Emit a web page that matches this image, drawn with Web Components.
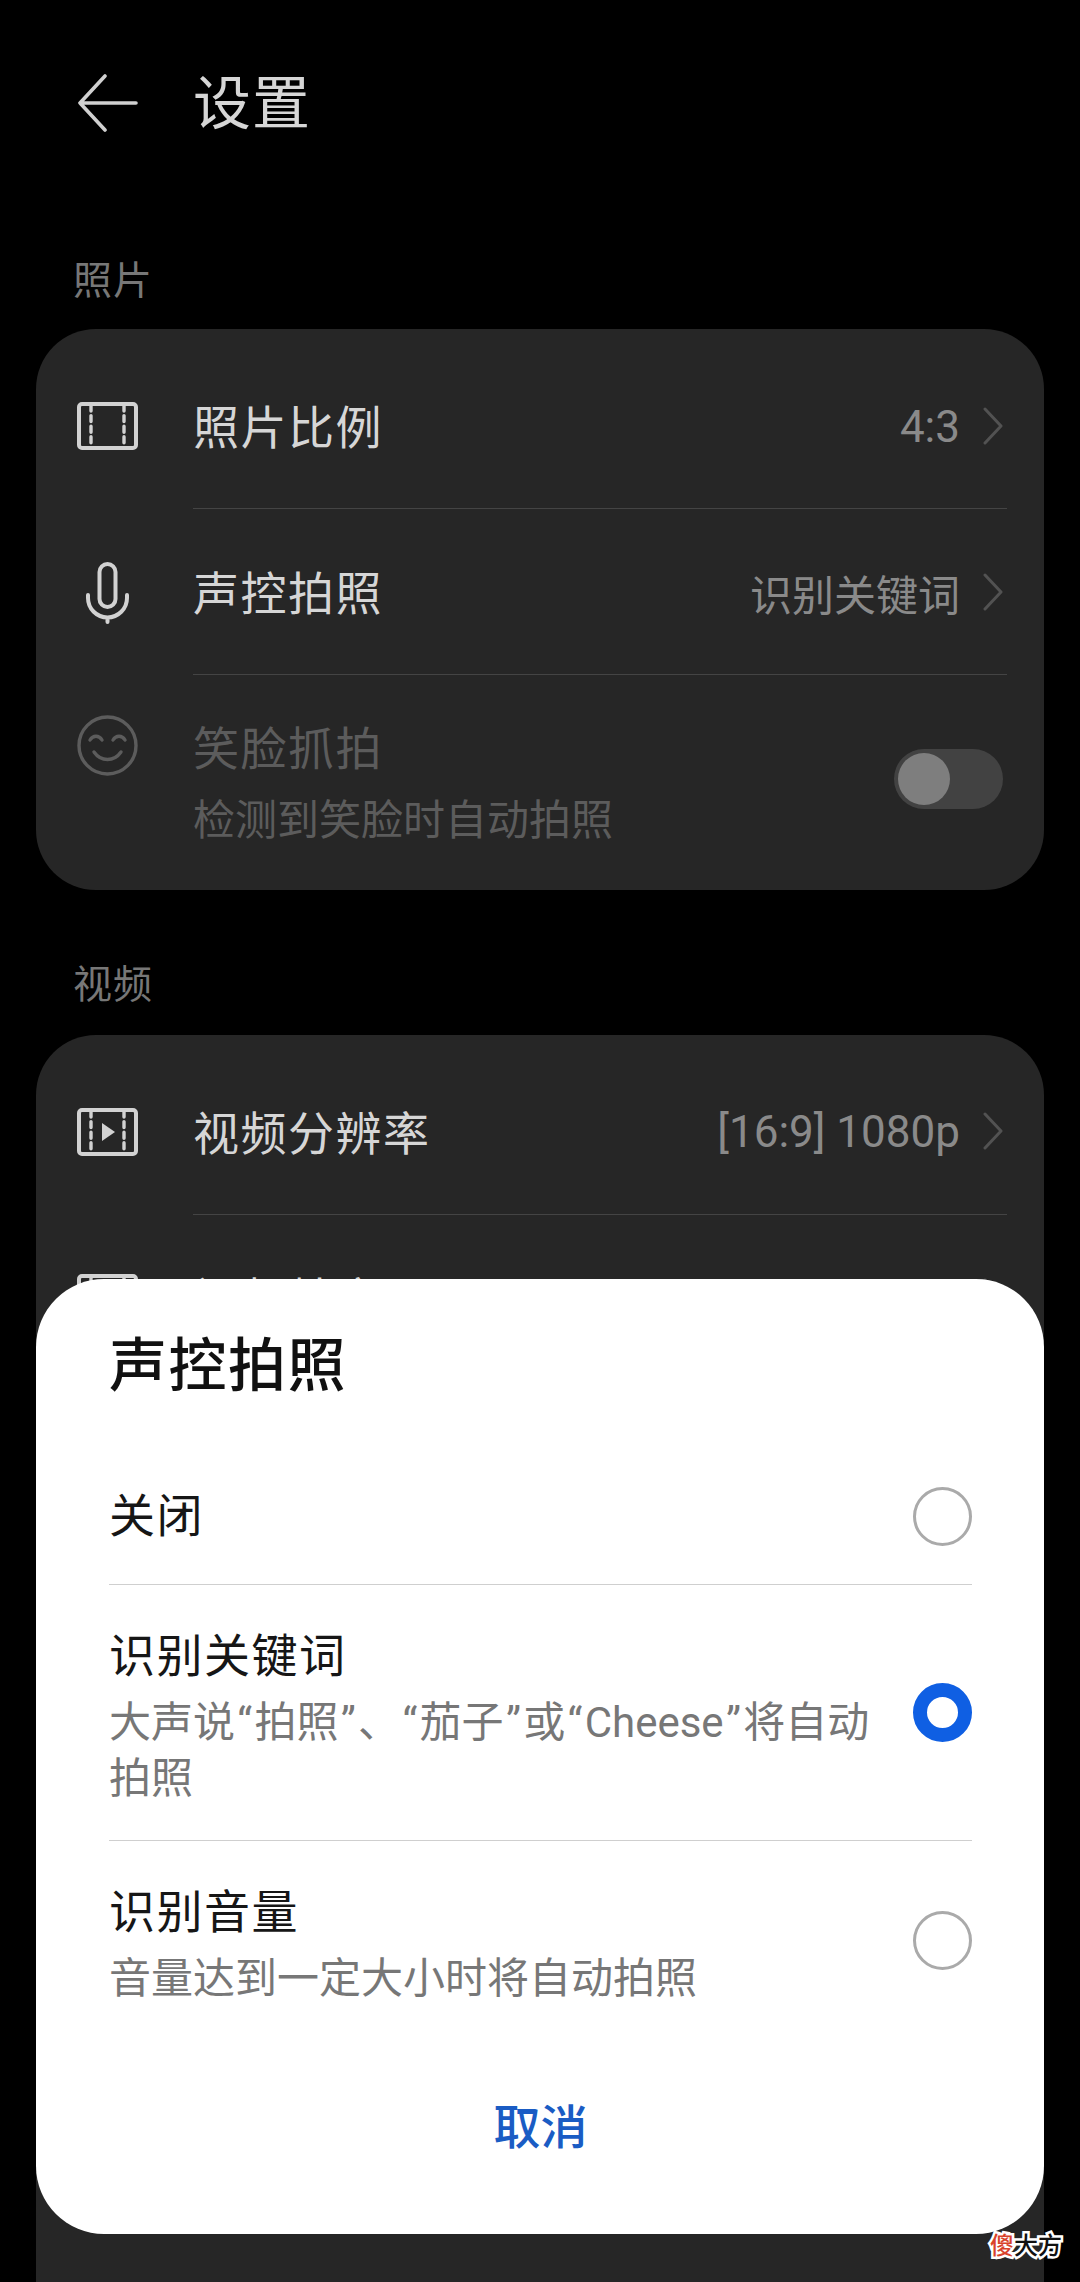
<!DOCTYPE html>
<html lang="zh-CN">
<head>
<meta charset="utf-8">
<title>设置</title>
<style>
  html, body { margin: 0; padding: 0; background: #000; }
  body { font-family: Roboto, "Noto Sans CJK SC", sans-serif; }
  .q { padding: 0 2.3px; }
</style>
</head>
<body>
<camera-settings>
  <top-bar>设置</top-bar>
  <group-label first>照片</group-label>
  <settings-card>
    <setting-row value="4:3" latin chevron>
      <line-icon slot="icon" name="film"></line-icon>照片比例
    </setting-row>
    <setting-row value="识别关键词" chevron>
      <line-icon slot="icon" name="mic"></line-icon>声控拍照
    </setting-row>
    <setting-row disabled last>
      <line-icon slot="icon" name="smile"></line-icon>笑脸抓拍
      <span slot="sub">检测到笑脸时自动拍照</span>
      <toggle-switch slot="end"></toggle-switch>
    </setting-row>
  </settings-card>
  <group-label>视频</group-label>
  <settings-card grow>
    <setting-row value="[16:9] 1080p" latin chevron>
      <line-icon slot="icon" name="video"></line-icon>视频分辨率
    </setting-row>
    <setting-row value="" chevron>
      <line-icon slot="icon" name="film"></line-icon>视频帧率
    </setting-row>
  </settings-card>

  <choice-dialog slot="overlay">
    <span slot="title">声控拍照</span>
    <choice-option plain>关闭</choice-option>
    <choice-option selected>识别关键词
      <span slot="sub">大声说<span class="q">“</span>拍照<span class="q">”</span>、<span class="q">“</span>茄子<span class="q">”</span>或<span class="q">“</span>Cheese<span class="q">”</span>将自动<br>拍照</span>
    </choice-option>
    <choice-option last>识别音量
      <span slot="sub">音量达到一定大小时将自动拍照</span>
    </choice-option>
    <span slot="action">取消</span>
  </choice-dialog>
  <water-mark slot="overlay"></water-mark>
</camera-settings>

<script>
const FONT = 'Roboto, "Noto Sans CJK SC", sans-serif';
function define(name, css, html) {
  class El extends HTMLElement {
    constructor() {
      super();
      this.attachShadow({ mode: 'open' }).innerHTML =
        '<style>' + css + '</style>' + (typeof html === 'function' ? html(this) : html);
    }
  }
  customElements.define(name, El);
}

define('camera-settings', `
  :host { display: flex; flex-direction: column; position: relative; width: 1080px; height: 2282px;
    overflow: hidden; background: #000; font-family: ${FONT}; }
`, '<slot></slot><slot name="overlay"></slot>');

define('top-bar', `
  :host { display: flex; flex: none; align-items: center; height: 204px; padding-left: 77px; box-sizing: border-box;
    color: #d6d6d6; font-size: 58px; letter-spacing: 1px; }
  svg { width: 62px; height: 60px; margin-right: 54px; flex: none; }
  .t { padding-bottom: 6px; }
`, `<svg viewBox="0 0 62 60" fill="none" stroke="#d0d0d0" stroke-width="3.6" stroke-linecap="round" stroke-linejoin="round">
    <path d="M59 31H3M28 4 3 31l25 27"/></svg><div class="t"><slot></slot></div>`);

define('group-label', `
  :host { display: block; flex: none; margin: 70px 0 0 73px; padding-bottom: 24.5px; height: 50px; line-height: 50px;
    color: #777; font-size: 39px; letter-spacing: 1px; }
  :host([first]) { margin-top: 52px; padding-bottom: 23px; }
`, '<slot></slot>');

define('settings-card', `
  :host { display: block; flex: none; margin: 0 36px; padding-top: 14px; background: #262626; border-radius: 60px; }
  :host([grow]) { min-height: 1400px; }
`, '<slot></slot>');

define('setting-row', `
  :host { display: flex; align-items: stretch; padding-left: 41px; color: #d6d6d6; font-size: 46px; letter-spacing: 1.5px; }
  .icon { flex: none; width: 116px; display: flex; align-items: center; }
  .main { flex: 1; display: flex; align-items: center; min-height: 165px; margin-right: 37px; padding-right: 4px;
    border-bottom: 1.5px solid #444; }
  .text { flex: 1; }
  .title { line-height: 60px; padding-top: 5px; }
  .sub { display: none; line-height: 60px; margin-top: 10px; }
  ::slotted([slot=sub]) { font-size: 42px; letter-spacing: 0; }
  .value { color: #8a8a8a; font-size: 42px; letter-spacing: 0; padding-top: 2px; }
  :host([latin]) .value { font-size: 44px; }
  .chev { display: none; width: 20px; height: 38px; margin-left: 23px; flex: none; }
  :host([chevron]) .chev { display: block; }
  :host([last]) .main { border-bottom: 0; min-height: 0; padding-top: 39px; padding-bottom: 39px; }
  :host([disabled]) { color: #5c5c5c; }
  :host([disabled]) .sub { display: block; }
  :host([disabled]) .icon { align-items: flex-start; padding-top: 40px; }
`, el => `<div class="icon"><slot name="icon"></slot></div>
  <div class="main">
    <div class="text"><div class="title"><slot></slot></div><div class="sub"><slot name="sub"></slot></div></div>
    <span class="value">${el.getAttribute('value') || ''}</span>
    <svg class="chev" viewBox="0 0 20 38" fill="none" stroke="#525252" stroke-width="3" stroke-linecap="round" stroke-linejoin="round"><path d="M2 2l16 17L2 36"/></svg>
    <slot name="end"></slot>
  </div>`);

const ICONS = {
  film: `<rect x="2" y="2" width="57" height="44" rx="3"/><path d="M14 3v42M47 3v42" stroke-width="3.4" stroke-dasharray="6 4.6"/>`,
  video: `<rect x="2" y="2" width="57" height="44" rx="3"/><path d="M14 3v42M47 3v42" stroke-width="3.4" stroke-dasharray="6 4.6"/><path d="M25 15l13 9-13 9z" fill="currentColor" stroke="none"/>`,
  mic: `<rect x="22.5" y="2" width="16" height="43" rx="8"/><path d="M11 33v3a19.5 19.5 0 0 0 39 0v-3M30.5 56v4"/>`,
  smile: `<circle cx="30.5" cy="30.5" r="28.5"/><path d="M13 25c3-5 9-5 12 0M36 25c3-5 9-5 12 0M17 37c7 10 20 10 27 0"/>`
};
define('line-icon', `
  :host { display: block; width: 61px; line-height: 0; color: #d2d2d2; }
  svg { display: block; width: 61px; }
  :host([name="smile"]) { color: #5c5c5c; }
  :host([name="mic"]) { padding-top: 2px; }
`, el => {
  const n = el.getAttribute('name');
  const h = (n === 'film' || n === 'video') ? 48 : 62;
  return `<svg viewBox="0 0 61 ${h}" height="${h}" fill="none" stroke="currentColor" stroke-width="${n === 'smile' ? 3.4 : 4}" stroke-linecap="round" stroke-linejoin="round">${ICONS[n]}</svg>`;
});

define('toggle-switch', `
  :host { display: block; position: relative; width: 109px; height: 60px; border-radius: 30px; background: #424242; flex: none; top: -4px; }
  i { position: absolute; left: 4px; top: 4px; width: 52px; height: 52px; border-radius: 50%; background: #7e7e7e; }
`, '<i></i>');

define('choice-dialog', `
  :host { display: block; position: absolute; left: 36px; right: 36px; top: 1279px; height: 955px; box-sizing: border-box;
    background: #fff; border-radius: 68px; padding: 0 72px 0 73px; color: #111; }
  .title { display: flex; align-items: center; box-sizing: border-box; height: 172px; font-size: 58px; font-weight: 500; letter-spacing: 1.5px; padding-bottom: 8px; }
  .action { display: flex; align-items: center; justify-content: center; box-sizing: border-box; height: 174px; padding-bottom: 6px; color: #1a5cc4;
    font-size: 47px; font-weight: 500; }
`, `<div class="title"><slot name="title"></slot></div><slot></slot><div class="action"><slot name="action"></slot></div>`);

define('choice-option', `
  :host { display: flex; align-items: center; box-sizing: border-box; min-height: 132.5px; padding: 41.5px 0 33px;
    border-bottom: 1.5px solid #cfcfcf; font-size: 46px; letter-spacing: 1.5px; color: #161616; }
  :host([plain]) { padding: 35px 0 37.5px; }
  :host([last]) { border-bottom: 0; }
  .text { flex: 1; }
  .title { line-height: 60px; }
  ::slotted([slot=sub]) { display: block; margin-top: 8.5px; line-height: 56px; font-size: 42px; letter-spacing: 0; color: #777; }
  .radio { flex: none; box-sizing: border-box; width: 59px; height: 59px; margin-top: -8px; border-radius: 50%; border: 3.4px solid #aaa; }
  :host([plain]) .radio { margin-top: 0; }
  :host([selected]) .radio { border: 14.5px solid #0f5fe3; }
`, `<div class="text"><div class="title"><slot></slot></div><slot name="sub"></slot></div><div class="radio"></div>`);

define('water-mark', `
  :host { display: block; position: absolute; left: 990px; top: 2228px; font-size: 24px; line-height: 32px; font-weight: 500;
    font-family: "Noto Sans CJK SC", sans-serif; color: #111; white-space: nowrap;
    -webkit-text-stroke: 5px #fff; paint-order: stroke fill; }
  b { font-weight: 500; color: #d9432b; }
`, '<b>傻</b>大方');
</script>
</body>
</html>
